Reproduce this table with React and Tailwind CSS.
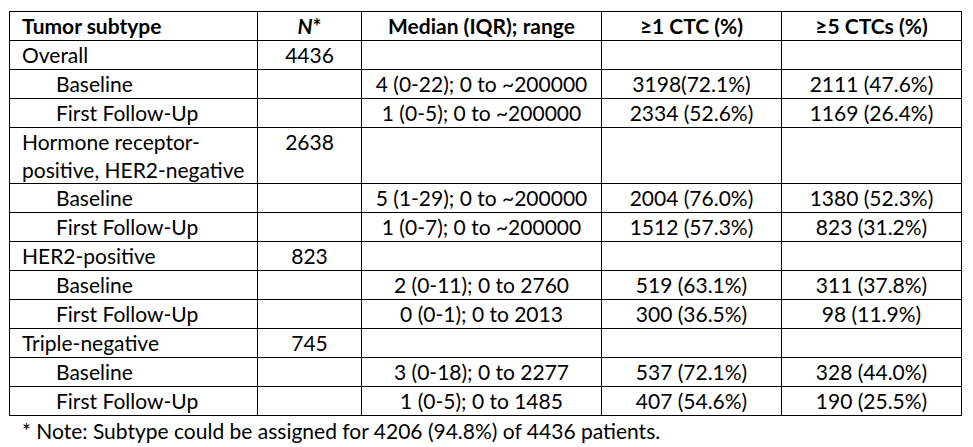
import React from "react";

const rows = [
  { label: "Overall", n: "4436" },
  { label: "Baseline", sub: true, median: "4 (0-22); 0 to ~200000", one: "3198(72.1%)", five: "2111 (47.6%)" },
  { label: "First Follow-Up", sub: true, median: "1 (0-5); 0 to ~200000", one: "2334 (52.6%)", five: "1169 (26.4%)" },
  { label: "Hormone receptor-\npositive, HER2-negative", n: "2638", tall: true },
  { label: "Baseline", sub: true, median: "5 (1-29); 0 to ~200000", one: "2004 (76.0%)", five: "1380 (52.3%)" },
  { label: "First Follow-Up", sub: true, median: "1 (0-7); 0 to ~200000", one: "1512 (57.3%)", five: "823 (31.2%)" },
  { label: "HER2-positive", n: "823" },
  { label: "Baseline", sub: true, median: "2 (0-11); 0 to 2760", one: "519 (63.1%)", five: "311 (37.8%)" },
  { label: "First Follow-Up", sub: true, median: "0 (0-1); 0 to 2013", one: "300 (36.5%)", five: "98 (11.9%)" },
  { label: "Triple-negative", n: "745" },
  { label: "Baseline", sub: true, median: "3 (0-18); 0 to 2277", one: "537 (72.1%)", five: "328 (44.0%)" },
  { label: "First Follow-Up", sub: true, median: "1 (0-5); 0 to 1485", one: "407 (54.6%)", five: "190 (25.5%)" },
];

export default function App() {
  return (
    <div className="bg-white w-[973px] h-[447px] pt-[11px] pl-[9px] text-black font-['Lato','Liberation_Sans',sans-serif] text-[21px]">
      <table className="border-collapse table-fixed w-[952px]">
        <colgroup>
          <col className="w-[248px]" />
          <col className="w-[104px]" />
          <col className="w-[240px]" />
          <col className="w-[180px]" />
          <col className="w-[180px]" />
        </colgroup>
        <thead>
          <tr className="font-bold leading-[28px]">
            <th className="border border-black text-left pl-[12px] p-0">Tumor subtype</th>
            <th className="border border-black text-center p-0">
              <i>N</i>*
            </th>
            <th className="border border-black text-center p-0">Median (IQR); range</th>
            <th className="border border-black text-center p-0">≥1 CTC (%)</th>
            <th className="border border-black text-center p-0">≥5 CTCs (%)</th>
          </tr>
        </thead>
        <tbody>
          {rows.map((r, i) => (
            <tr key={i} className={r.tall ? "leading-[27.5px] align-top" : "leading-[28px]"}>
              <td className={`border border-black p-0 whitespace-pre-line ${r.sub ? "pl-[46px]" : "pl-[12px]"}`}>
                {r.label}
              </td>
              <td className="border border-black p-0 text-center">{r.n}</td>
              <td className="border border-black p-0 text-center">{r.median}</td>
              <td className="border border-black p-0 text-center">{r.one}</td>
              <td className="border border-black p-0 text-center">{r.five}</td>
            </tr>
          ))}
        </tbody>
      </table>
      <p className="pl-[13px] leading-[30px]">
        * Note: Subtype could be assigned for 4206 (94.8%) of 4436 patients.
      </p>
    </div>
  );
}
